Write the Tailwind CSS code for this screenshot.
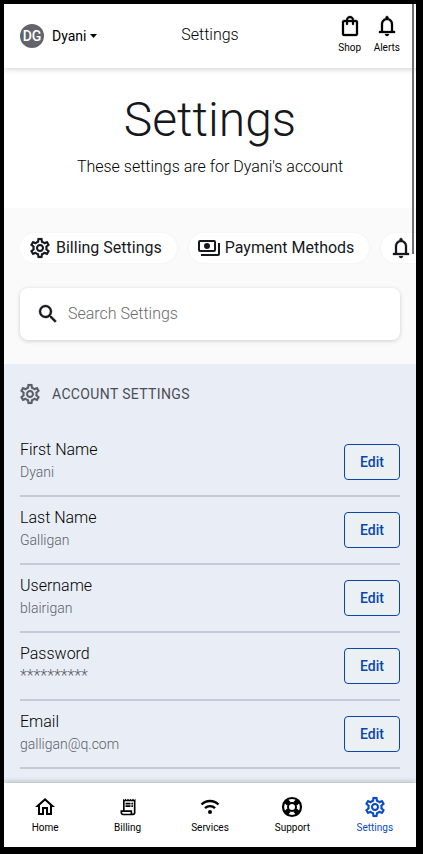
<!DOCTYPE html>
<html lang="en">
<head>
<meta charset="utf-8">
<meta name="viewport" content="width=device-width, initial-scale=1">
<title>Settings</title>
<script src="https://cdn.jsdelivr.net/npm/@tailwindcss/browser@4"></script>
</head>
<body class="h-screen overflow-hidden bg-black pt-1 pr-[7px] pb-[7px] pl-1 font-['Roboto',sans-serif] text-[#16181d]">
<svg class="hidden" aria-hidden="true">
  <symbol id="gear" viewBox="0 0 24 24"><path stroke="currentColor" stroke-width=".15" d="M19.43 12.98c.04-.32.07-.64.07-.98 0-.34-.03-.66-.07-.98l2.11-1.65c.19-.15.24-.42.12-.64l-2-3.46c-.09-.16-.26-.25-.44-.25-.06 0-.12.01-.17.03l-2.49 1c-.52-.4-1.08-.73-1.69-.98l-.38-2.65C14.46 2.18 14.25 2 14 2h-4c-.25 0-.46.18-.49.42l-.38 2.65c-.61.25-1.17.59-1.69.98l-2.49-1c-.06-.02-.12-.03-.18-.03-.17 0-.34.09-.43.25l-2 3.46c-.13.22-.07.49.12.64l2.11 1.65c-.04.32-.07.65-.07.98 0 .33.03.66.07.98l-2.11 1.65c-.19.15-.24.42-.12.64l2 3.46c.09.16.26.25.44.25.06 0 .12-.01.17-.03l2.49-1c.52.4 1.08.73 1.69.98l.38 2.65c.03.24.24.42.49.42h4c.25 0 .46-.18.49-.42l.38-2.65c.61-.25 1.17-.59 1.69-.98l2.49 1c.06.02.12.03.18.03.17 0 .34-.09.43-.25l2-3.46c.12-.22.07-.49-.12-.64l-2.11-1.65zm-1.98-1.71c.04.31.05.52.05.73 0 .21-.02.43-.05.73l-.14 1.13.89.7 1.08.84-.7 1.21-1.27-.51-1.04-.42-.9.68c-.43.32-.84.56-1.25.73l-1.06.43-.16 1.13-.2 1.35h-1.4l-.19-1.35-.16-1.13-1.06-.43c-.43-.18-.83-.41-1.23-.71l-.91-.7-1.06.43-1.27.51-.7-1.21 1.08-.84.89-.7-.14-1.13c-.03-.31-.05-.54-.05-.74s.02-.43.05-.73l.14-1.13-.89-.7-1.08-.84.7-1.21 1.27.51 1.04.42.9-.68c.43-.32.84-.56 1.25-.73l1.06-.43.16-1.13.2-1.35h1.39l.19 1.35.16 1.13 1.06.43c.43.18.83.41 1.23.71l.91.7 1.06-.43 1.27-.51.7 1.21-1.07.85-.89.7.14 1.13zM12 8c-2.21 0-4 1.79-4 4s1.79 4 4 4 4-1.79 4-4-1.79-4-4-4zm0 6c-1.1 0-2-.9-2-2s.9-2 2-2 2 .9 2 2-.9 2-2 2z"/></symbol>
  <symbol id="bell" viewBox="0 0 24 24"><path stroke="currentColor" stroke-width=".3" d="M4 19v-2h2v-7q0-2.075 1.25-3.688Q8.5 4.7 10.5 4.2v-.7q0-.625.438-1.062Q11.375 2 12 2t1.063.438Q13.5 2.875 13.5 3.5v.7q2 .5 3.25 2.112Q18 7.925 18 10v7h2v2Zm8 3q-.825 0-1.412-.587Q10 20.825 10 20h4q0 .825-.587 1.413Q12.825 22 12 22Zm-4-5h8v-7q0-1.65-1.175-2.825Q13.65 6 12 6q-1.65 0-2.825 1.175Q8 8.35 8 10Z"/></symbol>
</svg>
<div class="relative flex h-full flex-col overflow-hidden bg-white">
  <header class="relative z-10 grid h-16 shrink-0 grid-cols-3 items-center bg-white px-4 shadow-[0_1px_6px_rgba(0,0,0,0.2)]">
    <button class="flex items-center gap-2 text-sm text-black">
      <span class="flex size-6 items-center justify-center rounded-full bg-[#63636b] text-sm font-medium text-white">DG</span>
      <span class="flex items-center gap-1">Dyani
        <svg class="h-1 w-[7px]" viewBox="0 0 7 4" fill="currentColor" aria-hidden="true"><path d="M0 0h7L3.500 4z"/></svg>
      </span>
    </button>
    <p class="pb-0.5 text-center text-base font-light text-black">Settings</p>
    <div class="flex justify-end gap-3 pb-[5px] text-[10px] leading-3 text-black">
      <a href="#" class="flex flex-col items-center gap-1"><svg class="size-6" viewBox="0 0 24 24" fill="currentColor" stroke="currentColor" stroke-width=".3" aria-hidden="true"><path d="M6 22q-.825 0-1.412-.587Q4 20.825 4 20V8q0-.825.588-1.412Q5.175 6 6 6h2q0-1.650 1.175-2.825Q10.350 2 12 2q1.650 0 2.825 1.175Q16 4.350 16 6h2q.825 0 1.413.588Q20 7.175 20 8v12q0 .825-.587 1.413Q18.825 22 18 22Zm0-2h12V8h-2v2q0 .425-.287.712Q15.425 11 15 11t-.712-.288Q14 10.425 14 10V8h-4v2q0 .425-.287.712Q9.425 11 9 11t-.712-.288Q8 10.425 8 10V8H6v12Zm4-14h4q0-.825-.587-1.412Q12.825 4 12 4q-.825 0-1.412.588Q10 5.175 10 6Z"/></svg>Shop</a>
      <a href="#" class="flex flex-col items-center gap-1"><svg class="size-6" fill="currentColor" aria-hidden="true"><use href="#bell"/></svg>Alerts</a>
    </div>
  </header>

  <main class="min-h-0 flex-1 overflow-hidden">
    <section class="flex h-[140px] flex-col items-center pt-5 text-center">
      <h1 class="text-5xl leading-[64px] font-light">Settings</h1>
      <p class="text-base leading-[30px] font-light text-black">These settings are for Dyani's account</p>
    </section>

    <section class="bg-[#fafafa] px-4 pt-6 pb-6">
      <nav class="-mr-4 flex gap-3 overflow-hidden py-px whitespace-nowrap" aria-label="Quick settings">
        <a href="#" class="flex h-[30px] shrink-0 items-center gap-1 rounded-full bg-white pr-[15px] pl-2 shadow-[0_0_3px_rgba(0,0,0,0.05)]"><svg class="size-6" fill="currentColor" aria-hidden="true"><use href="#gear"/></svg>Billing Settings</a>
        <a href="#" class="flex h-[30px] shrink-0 items-center gap-1 rounded-full bg-white pr-[15px] pl-2 shadow-[0_0_3px_rgba(0,0,0,0.05)]"><svg class="size-6" viewBox="0 0 24 24" fill="currentColor" aria-hidden="true"><path fill-rule="evenodd" d="M3 4h14a2 2 0 0 1 2 2v8a2 2 0 0 1-2 2H3a2 2 0 0 1-2-2V6a2 2 0 0 1 2-2zm0 2v8h14V6zM10 7a3 3 0 1 1 0 6 3 3 0 0 1 0-6zM21 7h2v11a2 2 0 0 1-2 2H4v-2h17z"/></svg>Payment Methods</a>
        <a href="#" aria-label="Alerts" class="flex h-[30px] w-40 shrink-0 items-center rounded-full bg-white pl-2 shadow-[0_0_3px_rgba(0,0,0,0.05)]"><svg class="size-6" fill="currentColor" aria-hidden="true"><use href="#bell"/></svg></a>
      </nav>
      <label class="mt-6 flex h-[52px] items-center gap-2 rounded-lg bg-white px-4 shadow-[0_1px_4px_rgba(0,0,0,0.18)]">
        <svg class="size-6" viewBox="0 0 24 24" fill="currentColor" stroke="currentColor" stroke-width=".4" aria-hidden="true"><path d="M15.500 14h-.79l-.28-.27A6.471 6.471 0 0 0 16 9.500 6.500 6.500 0 1 0 9.500 16c1.610 0 3.090-.59 4.230-1.570l.27.28v.79l5 4.990L20.490 19l-4.990-5zm-6 0C7.010 14 5 11.990 5 9.500S7.010 5 9.500 5 14 7.010 14 9.500 11.990 14 9.500 14z"/></svg>
        <input type="search" aria-label="Search Settings" placeholder="Search Settings" class="min-w-0 flex-1 text-base font-light outline-none placeholder:text-[#6b6b6b]">
      </label>
    </section>

    <section class="bg-[#e9eef6] px-4 pt-[18px]">
      <h2 class="flex h-6 items-center gap-2 text-sm tracking-wide text-[#4a4d55] uppercase"><svg class="-ml-0.5 size-6 text-[#5c5f68]" fill="currentColor" aria-hidden="true"><use href="#gear"/></svg><span class="ml-0.5">Account Settings</span></h2>
      <ul class="mt-[23px]">
        <li class="flex h-[68px] items-center justify-between border-b-2 border-[#c5cad8]"><div class="pb-1 font-light"><p class="text-base leading-6 text-black">First Name</p><p class="text-sm leading-5 text-[#5c5f68]">Dyani</p></div><button class="h-9 w-14 rounded border border-[#0a47a9] bg-[#ebf0f4] text-sm font-medium text-[#0a47a9]">Edit</button></li>
        <li class="flex h-[68px] items-center justify-between border-b-2 border-[#c5cad8]"><div class="pb-1 font-light"><p class="text-base leading-6 text-black">Last Name</p><p class="text-sm leading-5 text-[#5c5f68]">Galligan</p></div><button class="h-9 w-14 rounded border border-[#0a47a9] bg-[#ebf0f4] text-sm font-medium text-[#0a47a9]">Edit</button></li>
        <li class="flex h-[68px] items-center justify-between border-b-2 border-[#c5cad8]"><div class="pb-1 font-light"><p class="text-base leading-6 text-black">Username</p><p class="text-sm leading-5 text-[#5c5f68]">blairigan</p></div><button class="h-9 w-14 rounded border border-[#0a47a9] bg-[#ebf0f4] text-sm font-medium text-[#0a47a9]">Edit</button></li>
        <li class="flex h-[68px] items-center justify-between border-b-2 border-[#c5cad8]"><div class="pb-1 font-light"><p class="text-base leading-6 text-black">Password</p><p class="text-base leading-5 text-[#5c5f68]">**********</p></div><button class="h-9 w-14 rounded border border-[#0a47a9] bg-[#ebf0f4] text-sm font-medium text-[#0a47a9]">Edit</button></li>
        <li class="flex h-[68px] items-center justify-between border-b-2 border-[#c5cad8]"><div class="pb-1 font-light"><p class="text-base leading-6 text-black">Email</p><p class="text-sm leading-5 text-[#5c5f68]">galligan@q.com</p></div><button class="h-9 w-14 rounded border border-[#0a47a9] bg-[#ebf0f4] text-sm font-medium text-[#0a47a9]">Edit</button></li>
        <li class="h-[68px]"></li>
      </ul>
    </section>
  </main>

  <nav class="relative z-10 grid h-16 shrink-0 grid-cols-5 bg-white pt-3 text-[10px] leading-3 text-black shadow-[0_-1px_5px_rgba(0,0,0,0.25)]" aria-label="Main">
    <a href="#" class="flex flex-col items-center gap-[3px]"><svg class="size-6" viewBox="0 0 24 24" fill="currentColor" aria-hidden="true"><path d="M12 5.690l5 4.500V18h-2v-6H9v6H7v-7.810l5-4.500M12 3L2 12h3v8h6v-6h2v6h6v-8h3L12 3z"/></svg>Home</a>
    <a href="#" class="flex flex-col items-center gap-[3px]"><svg class="size-6 p-0.5" viewBox="0 0 24 24" fill="currentColor" aria-hidden="true"><path d="M19.500 3.500L18 2l-1.500 1.500L15 2l-1.500 1.500L12 2l-1.500 1.500L9 2 7.500 3.500 6 2v14H3v3c0 1.660 1.340 3 3 3h12c1.660 0 3-1.340 3-3V2l-1.500 1.500zM15 20H6c-.55 0-1-.45-1-1v-1h10v2zm4-1c0 .55-.45 1-1 1s-1-.45-1-1v-3H8V5h11v14zM9 7h6v2H9zM16 7h2v2h-2zM9 10h6v2H9zM16 10h2v2h-2z"/></svg>Billing</a>
    <a href="#" class="flex flex-col items-center gap-[3px]"><svg class="size-6" viewBox="0 0 24 24" fill="none" stroke="currentColor" stroke-width="2.400" aria-hidden="true"><path d="M3.500 9.500a12 12 0 0 1 17 0M7 13.200a7 7 0 0 1 10 0"/><circle cx="12" cy="17" r="2" fill="currentColor" stroke="none"/></svg>Services</a>
    <a href="#" class="flex flex-col items-center gap-[3px]"><svg class="size-6" viewBox="0 0 24 24" fill="none" stroke="currentColor" aria-hidden="true"><circle cx="12" cy="12" r="9" stroke-width="2.200"/><circle cx="12" cy="12" r="4" stroke-width="2"/><path stroke-width="5" d="M5.800 5.800l3 3M18.200 5.800l-3 3M5.800 18.200l3-3M18.200 18.200l-3-3"/></svg>Support</a>
    <a href="#" aria-current="page" class="flex flex-col items-center gap-[3px] text-[#0a4bc4]"><svg class="size-6" fill="currentColor" aria-hidden="true"><use href="#gear"/></svg>Settings</a>
  </nav>

  <div class="absolute -top-1 right-0.5 z-20 h-[254px] w-0.5 bg-[#707070]"></div>
</div>
</body>
</html>
